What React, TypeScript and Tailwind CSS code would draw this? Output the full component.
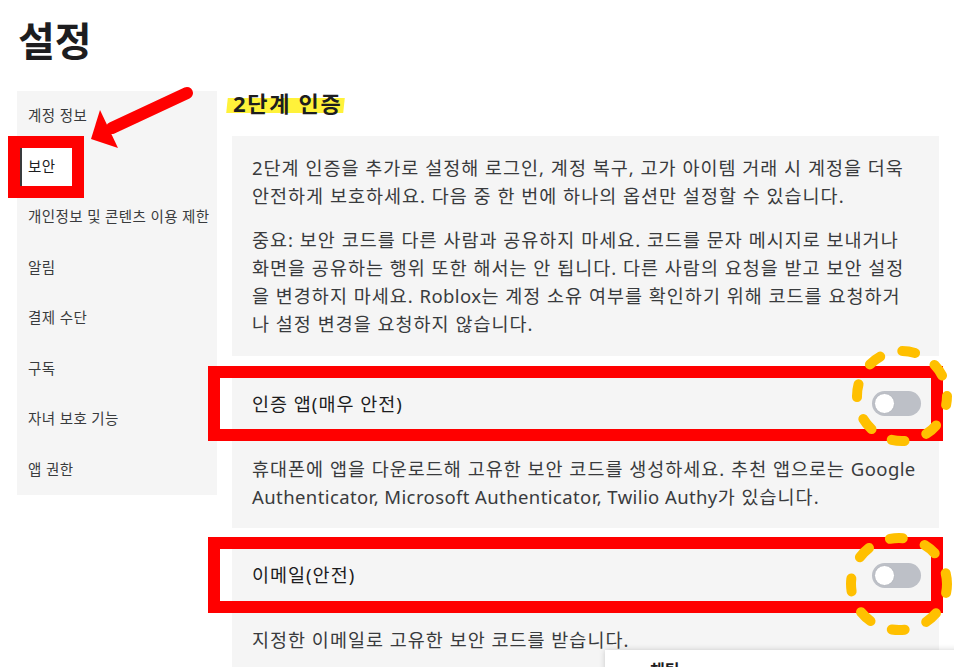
import React from "react";

const navItems = [
  "계정 정보",
  "보안",
  "개인정보 및 콘텐츠 이용 제한",
  "알림",
  "결제 수단",
  "구독",
  "자녀 보호 기능",
  "앱 권한",
];

function Toggle() {
  return (
    <div className="w-[49px] h-[25px] rounded-full bg-[#bdc0c7] flex items-center px-[2px]">
      <div className="w-[21px] h-[21px] rounded-full bg-white border border-[#b5b8bf]" />
    </div>
  );
}

function L({ children }: { children: React.ReactNode }) {
  return <span className="tracking-[0.4px]">{children}</span>;
}

function DashedCircle({ left, top, w, h }: { left: number; top: number; w: number; h: number }) {
  return (
    <svg
      className="absolute pointer-events-none"
      style={{ left, top }}
      width={w}
      height={h}
      viewBox={`0 0 ${w} ${h}`}
    >
      <ellipse
        cx={w / 2}
        cy={h / 2}
        rx={w / 2 - 6}
        ry={h / 2 - 6}
        fill="none"
        stroke="#ffc000"
        strokeWidth={10}
        strokeLinecap="round"
        strokeDasharray="13 23"
        strokeDashoffset={4}
      />
    </svg>
  );
}

const body = "text-[18.5px] leading-[28px] tracking-[1px]";

export default function App() {
  return (
    <div
      className="relative w-[954px] h-[667px] overflow-hidden bg-white text-[#393b3d]"
      style={{ fontFamily: "'Noto Sans', 'Noto Sans CJK KR', sans-serif" }}
    >
      <div className="pl-[18px] pt-[18px] h-[91px] text-[40px] leading-[46px] font-bold text-[#1d1d1f]">
        설정
      </div>

      <div className="flex pl-[17px] gap-[15px]">
        {/* Sidebar */}
        <nav className="w-[200px] h-[404px] bg-[#f5f5f5] flex flex-col">
          {navItems.map((item, i) => (
            <div key={item} className="h-[50.5px] flex items-center">
              {i === 1 ? (
                <div className="ml-[3px] w-[52px] h-[38px] bg-white border-l-[2px] border-[#393b3d] flex items-center pl-[6px] text-[14.5px] tracking-[0.4px] text-[#1d1d1f]">
                  {item}
                </div>
              ) : (
                <span className="pl-[11px] text-[14.5px] tracking-[0.4px]">{item}</span>
              )}
            </div>
          ))}
        </nav>

        {/* Main */}
        <main className="w-[707px] flex flex-col">
          <div className="h-[24px] flex items-center">
            <h2 className="relative ml-[1px] text-[22px] tracking-[1.7px] font-bold text-[#1d1d1f] leading-[24px]">
              <span className="absolute left-[-6px] right-[-2px] top-[7px] h-[15px] bg-[#fff23a] -skew-x-6" />
              <span className="relative">2단계 인증</span>
            </h2>
          </div>

          <div className={`mt-[21px] bg-[#f5f5f5] px-[20px] py-[18px] ${body}`}>
            <p className="whitespace-nowrap">
              2단계 인증을 추가로 설정해 로그인, 계정 복구, 고가 아이템 거래 시 계정을 더욱
              <br />
              안전하게 보호하세요. 다음 중 한 번에 하나의 옵션만 설정할 수 있습니다.
            </p>
            <p className="mt-[16px] whitespace-nowrap">
              중요: 보안 코드를 다른 사람과 공유하지 마세요. 코드를 문자 메시지로 보내거나
              <br />
              화면을 공유하는 행위 또한 해서는 안 됩니다. 다른 사람의 요청을 받고 보안 설정
              <br />
              을 변경하지 마세요. <L>Roblox</L>는 계정 소유 여부를 확인하기 위해 코드를 요청하거
              <br />
              나 설정 변경을 요청하지 않습니다.
            </p>
          </div>

          <div className="mt-[10px] bg-[#f5f5f5]">
            <div className="h-[75px] flex items-center justify-between pl-[20px] pr-[18px]">
              <span className="text-[18.5px] tracking-[1px] text-[#1d1d1f]">인증 앱(매우 안전)</span>
              <Toggle />
            </div>
            <div className={`px-[20px] pt-[14px] pb-[17px] whitespace-nowrap ${body}`}>
              휴대폰에 앱을 다운로드해 고유한 보안 코드를 생성하세요. 추천 앱으로는 <L>Google</L>
              <br />
              <L>Authenticator, Microsoft Authenticator, Twilio Authy</L>가 있습니다.
            </div>
          </div>

          <div className="mt-[9px] bg-[#f5f5f5]">
            <div className="h-[76px] flex items-center justify-between pl-[20px] pr-[18px]">
              <span className="text-[18.5px] tracking-[1px] text-[#1d1d1f]">이메일(안전)</span>
              <Toggle />
            </div>
            <div className={`px-[20px] pt-[13px] pb-[17px] ${body}`}>
              지정한 이메일로 고유한 보안 코드를 받습니다.
            </div>
          </div>
        </main>
      </div>

      {/* Annotations */}
      <div className="absolute left-[8px] top-[136px] w-[76px] h-[62px] border-[12px] border-[#ff0000]" />
      <div className="absolute left-[208px] top-[366px] w-[735px] h-[75px] border-[12px] border-[#ff0000]" />
      <div className="absolute left-[208px] top-[537px] w-[735px] h-[76px] border-[12px] border-[#ff0000]" />

      <svg className="absolute left-0 top-0 pointer-events-none" width="954" height="667">
        <line x1="187" y1="93" x2="112" y2="128" stroke="#ff0000" strokeWidth="12" strokeLinecap="round" />
        <polygon points="91,139 100,110 118,148" fill="#ff0000" />
      </svg>

      <DashedCircle left={851} top={345} w={102} h={102} />
      <DashedCircle left={845} top={532} w={108} h={104} />

      {/* Chat widget */}
      <div className="absolute left-[605px] top-[650px] w-[360px] h-[60px] bg-white shadow-[0_0_6px_rgba(0,0,0,0.18)] pl-[45px] pt-[8px] text-[16px] font-bold text-[#1d1d1f]">
        채팅
      </div>
    </div>
  );
}
